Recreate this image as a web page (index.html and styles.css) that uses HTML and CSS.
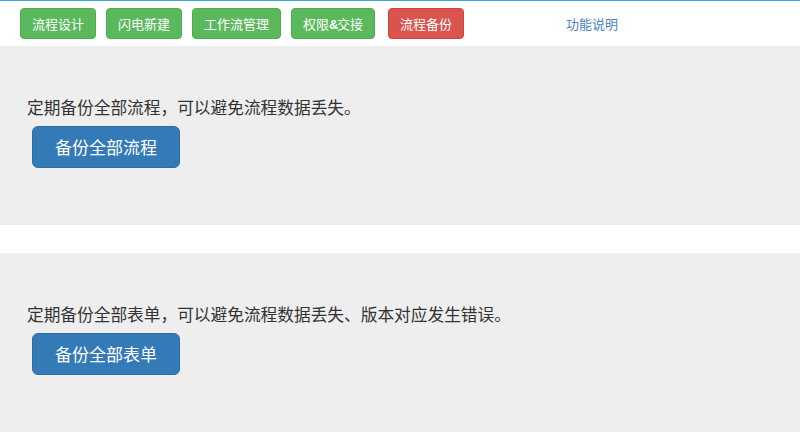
FILE: index.html
```html
<!DOCTYPE html>
<html lang="zh-CN">
  <head>
    <meta charset="utf-8">
    <title>流程备份</title>
    <link rel="stylesheet" href="styles.css">
  </head>
  <body>

  <div class="topnav">
    <a class="btn btn-success" href="#">流程设计</a>
    <a class="btn btn-success" href="#">闪电新建</a>
    <a class="btn btn-success" href="#">工作流管理</a>
    <a class="btn btn-success" href="#">权限<span class="amp">&amp;</span>交接</a>
    <a class="btn btn-danger" href="#">流程备份</a>
    <a class="help" href="#">功能说明</a>
  </div>

  <div class="panel">
    <p class="desc">定期备份全部流程，可以避免流程数据丢失。</p>
    <a class="btn-lg" href="#">备份全部流程</a>
  </div>

  <div class="panel">
    <p class="desc">定期备份全部表单，可以避免流程数据丢失、版本对应发生错误。</p>
    <a class="btn-lg" href="#">备份全部表单</a>
  </div>

  </body>
</html>
```

FILE: styles.css
```css
html {
  height: 100%;
}
body {
  margin: 0;
  padding: 0;
  background: #ffffff;
  color: #333333;
  font-family: "Microsoft YaHei", "Noto Sans CJK SC", sans-serif;
  font-size: 14px;
}

a {
  text-decoration: none;
}

.topnav {
  display: flex;
  align-items: center;
  height: 32px;
  border-top: 1px solid #3ba4de;
  padding: 6px 20px 7px;
  gap: 10px;
}

.btn {
  display: inline-block;
  font-size: 13px;
  line-height: 19px;
  height: 19px;
  padding: 5px 11px;
  border: 1px solid transparent;
  border-radius: 4px;
  color: #ffffff;
  white-space: nowrap;
}

.btn .amp {
  font-family: "Liberation Sans", sans-serif;
  font-weight: bold;
  line-height: 1;
  letter-spacing: -1.5px;
}

.btn-success {
  background-color: #5cb85c;
  border-color: #4cae4c;
}

.btn-danger {
  background-color: #d9534f;
  border-color: #d43f3a;
  margin-left: 3px;
}

.help {
  margin-left: 92px;
  font-size: 13px;
  color: #4a84c2;
}

.panel {
  background-color: #eeeeee;
  padding: 50px 27px 57px;
}

.panel + .panel {
  margin-top: 28px;
}

.desc {
  margin: 0;
  font-size: 16.7px;
  line-height: 22px;
}

.btn-lg {
  display: inline-block;
  margin: 8px 0 0 5px;
  padding: 8px 22px;
  font-size: 17px;
  line-height: 24px;
  color: #ffffff;
  background-color: #337ab7;
  border: 1px solid #2e6da4;
  border-radius: 6px;
}
```
